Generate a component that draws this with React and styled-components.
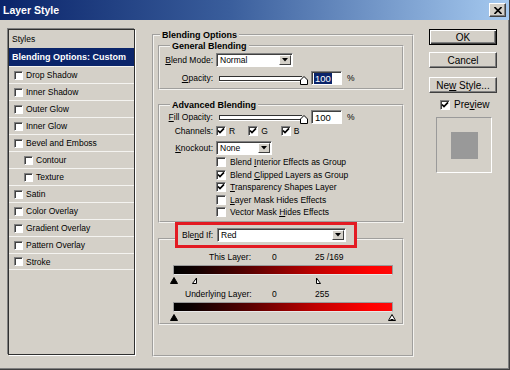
import React from "react";
import styled, { createGlobalStyle } from "styled-components";

const GlobalStyle = createGlobalStyle`
  html, body {
    margin: 0;
    padding: 0;
    background: #d4d0c8;
  }
  body {
    font-family: "Liberation Sans", Arial, sans-serif;
    font-size: 8.5px;
    color: #000;
  }
  * {
    box-sizing: border-box;
  }
`;

const Dialog = styled.div`
  width: 510px;
  height: 370px;
  display: flex;
  flex-direction: column;
  background: #d4d0c8;
  border-right: 1px solid #404040;
  border-bottom: 1px solid #404040;
  box-shadow: inset -1px -1px 0 #808080;
  overflow: hidden;
`;

const TitleBar = styled.div`
  height: 20px;
  flex-shrink: 0;
  display: flex;
  align-items: center;
  justify-content: space-between;
  padding: 0 3px 0 3px;
  background: linear-gradient(to right, #0a246a 0%, #3a5e9c 45%, #a6caf0 100%);
  color: #fff;
  font-size: 10.5px;
  font-weight: bold;
`;

const CloseButton = styled.div`
  width: 17px;
  height: 14px;
  display: flex;
  align-items: center;
  justify-content: center;
  background: #d4d0c8;
  border: 1px solid;
  border-color: #fff #404040 #404040 #fff;
  box-shadow: inset -1px -1px 0 #808080;
`;

const Body = styled.div`
  flex: 1;
  display: flex;
  align-items: flex-start;
  padding: 9px 0 0 8px;
`;

const StylesPanel = styled.div`
  width: 127px;
  height: 326px;
  border: 1px solid #303030;
  box-shadow: -1px -1px 0 #808080, 1px 1px 0 #fff;
  display: flex;
  flex-direction: column;
`;

const PanelHeader = styled.div`
  height: 18px;
  display: flex;
  align-items: center;
  padding-left: 3px;
`;

const SelectedRow = styled.div`
  height: 18px;
  display: flex;
  align-items: center;
  padding-left: 3px;
  background: #0a246a;
  color: #fff;
  font-weight: bold;
  font-size: 9px;
`;

const StyleRow = styled.div`
  height: 17px;
  display: flex;
  align-items: center;
  gap: 3px;
  padding-left: ${(p) => (p.$sub ? 15 : 5)}px;
  border-top: 1px solid #f4f3f0;
  &:last-child {
    border-bottom: 1px solid #f4f3f0;
  }
`;

const Box = styled.div`
  width: ${(p) => p.$size}px;
  height: ${(p) => p.$size}px;
  flex-shrink: 0;
  background: #fff;
  border: 1px solid;
  border-color: #808080 #fff #fff #808080;
  box-shadow: inset 1px 1px 0 #404040;
  display: flex;
  align-items: center;
  justify-content: center;
`;

const Frame = styled.fieldset`
  margin: 0 0 0 17px;
  padding: 0 0 0 4px;
  width: 262px;
  height: 328px;
  border: 2px groove #f4f3f0;
  min-inline-size: 0;
`;

const Group = styled.fieldset`
  margin: ${(p) => p.$mt}px 0 0 0;
  padding: ${(p) => p.$pad};
  width: 246px;
  border: 2px groove #f4f3f0;
  min-inline-size: 0;
`;

const Legend = styled.legend`
  margin-left: ${(p) => p.$ml}px;
  padding: 0 2px;
  font-weight: bold;
  font-size: 9px;
  line-height: 12px;
`;

const BlendLegend = styled.legend`
  margin-left: 2px;
  padding: 0 0 8px 0;
`;

const RedBox = styled.div`
  width: 182px;
  height: 26px;
  border: 3px solid #e31b23;
  display: flex;
  align-items: center;
  padding-left: 4px;
  background: #d4d0c8;
`;

const FieldRow = styled.div`
  display: flex;
  align-items: center;
  height: ${(p) => p.$h || 14}px;
  margin-top: ${(p) => p.$mt || 0}px;
`;

const FieldLabel = styled.div`
  width: ${(p) => p.$w || 53}px;
  text-align: ${(p) => p.$align || "right"};
  margin-right: 3px;
  flex-shrink: 0;
  white-space: nowrap;
`;

const U = styled.span`
  text-decoration: underline;
`;

const SelectBox = styled.div`
  width: ${(p) => p.$w}px;
  height: 14px;
  display: flex;
  align-items: center;
  justify-content: space-between;
  background: #fff;
  border: 1px solid;
  border-color: #808080 #fff #fff #808080;
  box-shadow: inset 1px 1px 0 #404040;
  padding: 1px 1px 1px 3px;
`;

const DropButton = styled.div`
  width: 12px;
  height: 10px;
  display: flex;
  align-items: center;
  justify-content: center;
  background: #d4d0c8;
  border: 1px solid;
  border-color: #fff #404040 #404040 #fff;
`;

const Track = styled.div`
  width: 83px;
  height: 5px;
  margin-left: 3px;
  background: #fff;
  border: 1px solid #303030;
  border-right: none;
  box-shadow: 0 1px 0 #fff;
`;

const Thumb = styled.svg`
  margin-left: -2px;
  margin-top: 4px;
`;

const NumberBox = styled.div`
  width: 31px;
  height: 14px;
  margin-left: 3px;
  background: #fff;
  border: 1px solid;
  border-color: #808080 #fff #fff #808080;
  box-shadow: inset 1px 1px 0 #404040;
  display: flex;
  align-items: center;
  padding-left: 2px;
  font-size: 9.5px;
`;

const Highlight = styled.span`
  background: ${(p) => (p.$on ? "#0a246a" : "transparent")};
  color: ${(p) => (p.$on ? "#fff" : "#000")};
  padding: 0 1px;
`;

const Percent = styled.span`
  margin-left: 5px;
`;

const Channel = styled.div`
  display: flex;
  align-items: center;
  gap: 3px;
  margin-right: ${(p) => p.$mr}px;
`;

const OptionList = styled.div`
  margin: 1px 0 0 56px;
  display: flex;
  flex-direction: column;
`;

const OptionRow = styled.div`
  height: 12.5px;
  display: flex;
  align-items: center;
  gap: 4px;
`;

const ValueGrid = styled.div`
  display: grid;
  grid-template-columns: 99px 43px auto;
  height: 10px;
  align-items: center;
  margin-top: ${(p) => p.$mt}px;
`;

const RangeLabel = styled.div`
  padding-left: ${(p) => p.$pl}px;
  white-space: nowrap;
`;

const RampBar = styled.div`
  width: 220px;
  height: 10px;
  margin-top: ${(p) => p.$mt}px;
  border: 1px solid #9a9a9a;
  border-bottom-color: #e8e8e8;
  background: linear-gradient(
    to right,
    #000 0%,
    #0c0000 8%,
    #5a0000 35%,
    #c00000 65%,
    #ff0000 90%,
    #ff0808 100%
  );
`;

const MarkerTrack = styled.div`
  position: relative;
  width: 220px;
  height: 7px;
  margin-top: 2px;
`;

const Marker = styled.svg`
  position: absolute;
  top: 0;
`;

const Side = styled.div`
  width: 68px;
  margin-left: 15px;
  display: flex;
  flex-direction: column;
  font-size: 10px;
`;

const Button = styled.div`
  height: 16px;
  margin-top: ${(p) => p.$mt || 0}px;
  display: flex;
  align-items: center;
  justify-content: center;
  background: #d4d0c8;
  border: 1px solid;
  border-color: ${(p) => (p.$default ? "#000" : "#fff #404040 #404040 #fff")};
  box-shadow: ${(p) =>
    p.$default
      ? "inset 1px 1px 0 #fff, inset -1px -1px 0 #404040, inset -2px -2px 0 #808080"
      : "inset -1px -1px 0 #808080"};
`;

const PreviewToggle = styled.div`
  height: 11px;
  margin: 6px 0 0 11px;
  display: flex;
  align-items: center;
  gap: 4px;
`;

const PreviewWell = styled.div`
  width: 56px;
  height: 56px;
  margin: 7px 0 0 7px;
  border: 1px solid;
  border-color: #9a9a9a #fff #fff #9a9a9a;
  display: flex;
  align-items: center;
  justify-content: center;
`;

const Swatch = styled.div`
  width: 27px;
  height: 27px;
  background: #999;
`;

const Checkbox = ({ checked, size = 10 }) => (
  <Box $size={size}>
    {checked && (
      <svg width="8" height="8" viewBox="0 0 8 8">
        <path d="M1 3.5 L3 5.6 L7 1.4" fill="none" stroke="#000" strokeWidth="1.7" />
      </svg>
    )}
  </Box>
);

const Select = ({ value, width }) => (
  <SelectBox $w={width}>
    <span>{value}</span>
    <DropButton>
      <svg width="6" height="4" viewBox="0 0 6 4">
        <path d="M0 0 H6 L3 3.5 Z" fill="#000" />
      </svg>
    </DropButton>
  </SelectBox>
);

const Slider = ({ value, selected }) => (
  <>
    <Track />
    <Thumb width="8" height="9" viewBox="0 0 8 9">
      <path d="M0.5 8.5 V4 L4 0.5 L7.5 4 V8.5 Z" fill="#fff" stroke="#000" />
    </Thumb>
    <NumberBox>
      <Highlight $on={selected}>{value}</Highlight>
    </NumberBox>
    <Percent>%</Percent>
  </>
);

const markerShapes = {
  black: <path d="M0.5 6.5 L4 0.5 L7.5 6.5 Z" fill="#000" stroke="#000" />,
  white: (
    <>
      <path d="M0.5 6.5 L4 0.5 L7.5 6.5 Z" fill="#fff" stroke="#000" />
      <path d="M2.5 5.5 H5.5" stroke="#000" />
    </>
  ),
  left: <path d="M1.5 6.5 L5.5 1 V6.5 Z" fill="#fff" stroke="#000" />,
  right: <path d="M2.5 6.5 V1 L6.5 6.5 Z" fill="#fff" stroke="#000" />,
};

const MarkerRow = ({ markers }) => (
  <MarkerTrack>
    {markers.map((m, i) => (
      <Marker
        key={i}
        width="8"
        height="7"
        viewBox="0 0 8 7"
        style={{ left: (m.value / 255) * 218 - 3 }}
      >
        {markerShapes[m.kind]}
      </Marker>
    ))}
  </MarkerTrack>
);

const styleItems = [
  { label: "Drop Shadow" },
  { label: "Inner Shadow" },
  { label: "Outer Glow" },
  { label: "Inner Glow" },
  { label: "Bevel and Emboss" },
  { label: "Contour", sub: true },
  { label: "Texture", sub: true },
  { label: "Satin" },
  { label: "Color Overlay" },
  { label: "Gradient Overlay" },
  { label: "Pattern Overlay" },
  { label: "Stroke" },
];

const options = [
  { pre: "Blend ", key: "I", post: "nterior Effects as Group", checked: false },
  { pre: "Blend ", key: "C", post: "lipped Layers as Group", checked: true },
  { pre: "", key: "T", post: "ransparency Shapes Layer", checked: true },
  { pre: "", key: "L", post: "ayer Mask Hides Effects", checked: false },
  { pre: "Vector Mask ", key: "H", post: "ides Effects", checked: false },
];

export default function App() {
  return (
    <>
      <GlobalStyle />
      <Dialog>
        <TitleBar>
          <span>Layer Style</span>
          <CloseButton>
            <svg width="8" height="7" viewBox="0 0 8 7">
              <path d="M0.5 0 L7.5 7 M7.5 0 L0.5 7" stroke="#000" strokeWidth="1.6" />
            </svg>
          </CloseButton>
        </TitleBar>
        <Body>
          <StylesPanel>
            <PanelHeader>Styles</PanelHeader>
            <SelectedRow>Blending Options: Custom</SelectedRow>
            <div>
              {styleItems.map((item) => (
                <StyleRow key={item.label} $sub={item.sub}>
                  <Checkbox size={9} />
                  <span>{item.label}</span>
                </StyleRow>
              ))}
            </div>
          </StylesPanel>

          <Frame>
            <Legend $ml={2}>Blending Options</Legend>

            <Group $mt={-1} $pad="1px 0 3px 0">
              <Legend $ml={10}>General Blending</Legend>
              <FieldRow>
                <FieldLabel>
                  <U>B</U>lend Mode:
                </FieldLabel>
                <Select value="Normal" width={77} />
              </FieldRow>
              <FieldRow $mt={4}>
                <FieldLabel>
                  <U>O</U>pacity:
                </FieldLabel>
                <Slider value="100" selected />
              </FieldRow>
            </Group>

            <Group $mt={9} $pad="0 0 2.5px 0">
              <Legend $ml={10}>Advanced Blending</Legend>
              <FieldRow $mt={-1}>
                <FieldLabel>
                  <U>F</U>ill Opacity:
                </FieldLabel>
                <Slider value="100" />
              </FieldRow>
              <FieldRow $mt={2} $h={10}>
                <FieldLabel>Channels:</FieldLabel>
                <Channel $mr={13}>
                  <Checkbox checked />R
                </Channel>
                <Channel $mr={13}>
                  <Checkbox checked />G
                </Channel>
                <Channel $mr={0}>
                  <Checkbox checked />B
                </Channel>
              </FieldRow>
              <FieldRow $mt={5}>
                <FieldLabel>
                  <U>K</U>nockout:
                </FieldLabel>
                <Select value="None" width={56} />
              </FieldRow>
              <OptionList>
                {options.map((o) => (
                  <OptionRow key={o.post}>
                    <Checkbox checked={o.checked} />
                    <span>
                      {o.pre}
                      <U>{o.key}</U>
                      {o.post}
                    </span>
                  </OptionRow>
                ))}
              </OptionList>
            </Group>

            <Group $mt={-1} $pad="0 0 0 13px" style={{ height: 103 }}>
              <BlendLegend>
                <RedBox>
                  <FieldLabel $w={32} $align="left">
                    Ble<U>n</U>d If:
                  </FieldLabel>
                  <Select value="Red" width={129} />
                </RedBox>
              </BlendLegend>
              <ValueGrid $mt={-4}>
                <RangeLabel $pl={36}>This Layer:</RangeLabel>
                <span>0</span>
                <span>25 /169</span>
              </ValueGrid>
              <RampBar $mt={3} />
              <MarkerRow
                markers={[
                  { kind: "black", value: 0 },
                  { kind: "left", value: 25 },
                  { kind: "right", value: 169 },
                ]}
              />
              <ValueGrid $mt={5}>
                <RangeLabel $pl={12}>Underlying Layer:</RangeLabel>
                <span>0</span>
                <span>255</span>
              </ValueGrid>
              <RampBar $mt={3} />
              <MarkerRow
                markers={[
                  { kind: "black", value: 0 },
                  { kind: "white", value: 255 },
                ]}
              />
            </Group>
          </Frame>

          <Side>
            <Button $default>OK</Button>
            <Button $mt={7}>Cancel</Button>
            <Button $mt={9}>
              <span>
                Ne<U>w</U> Style...
              </span>
            </Button>
            <PreviewToggle>
              <Checkbox checked />
              <span>
                Pre<U>v</U>iew
              </span>
            </PreviewToggle>
            <PreviewWell>
              <Swatch />
            </PreviewWell>
          </Side>
        </Body>
      </Dialog>
    </>
  );
}
